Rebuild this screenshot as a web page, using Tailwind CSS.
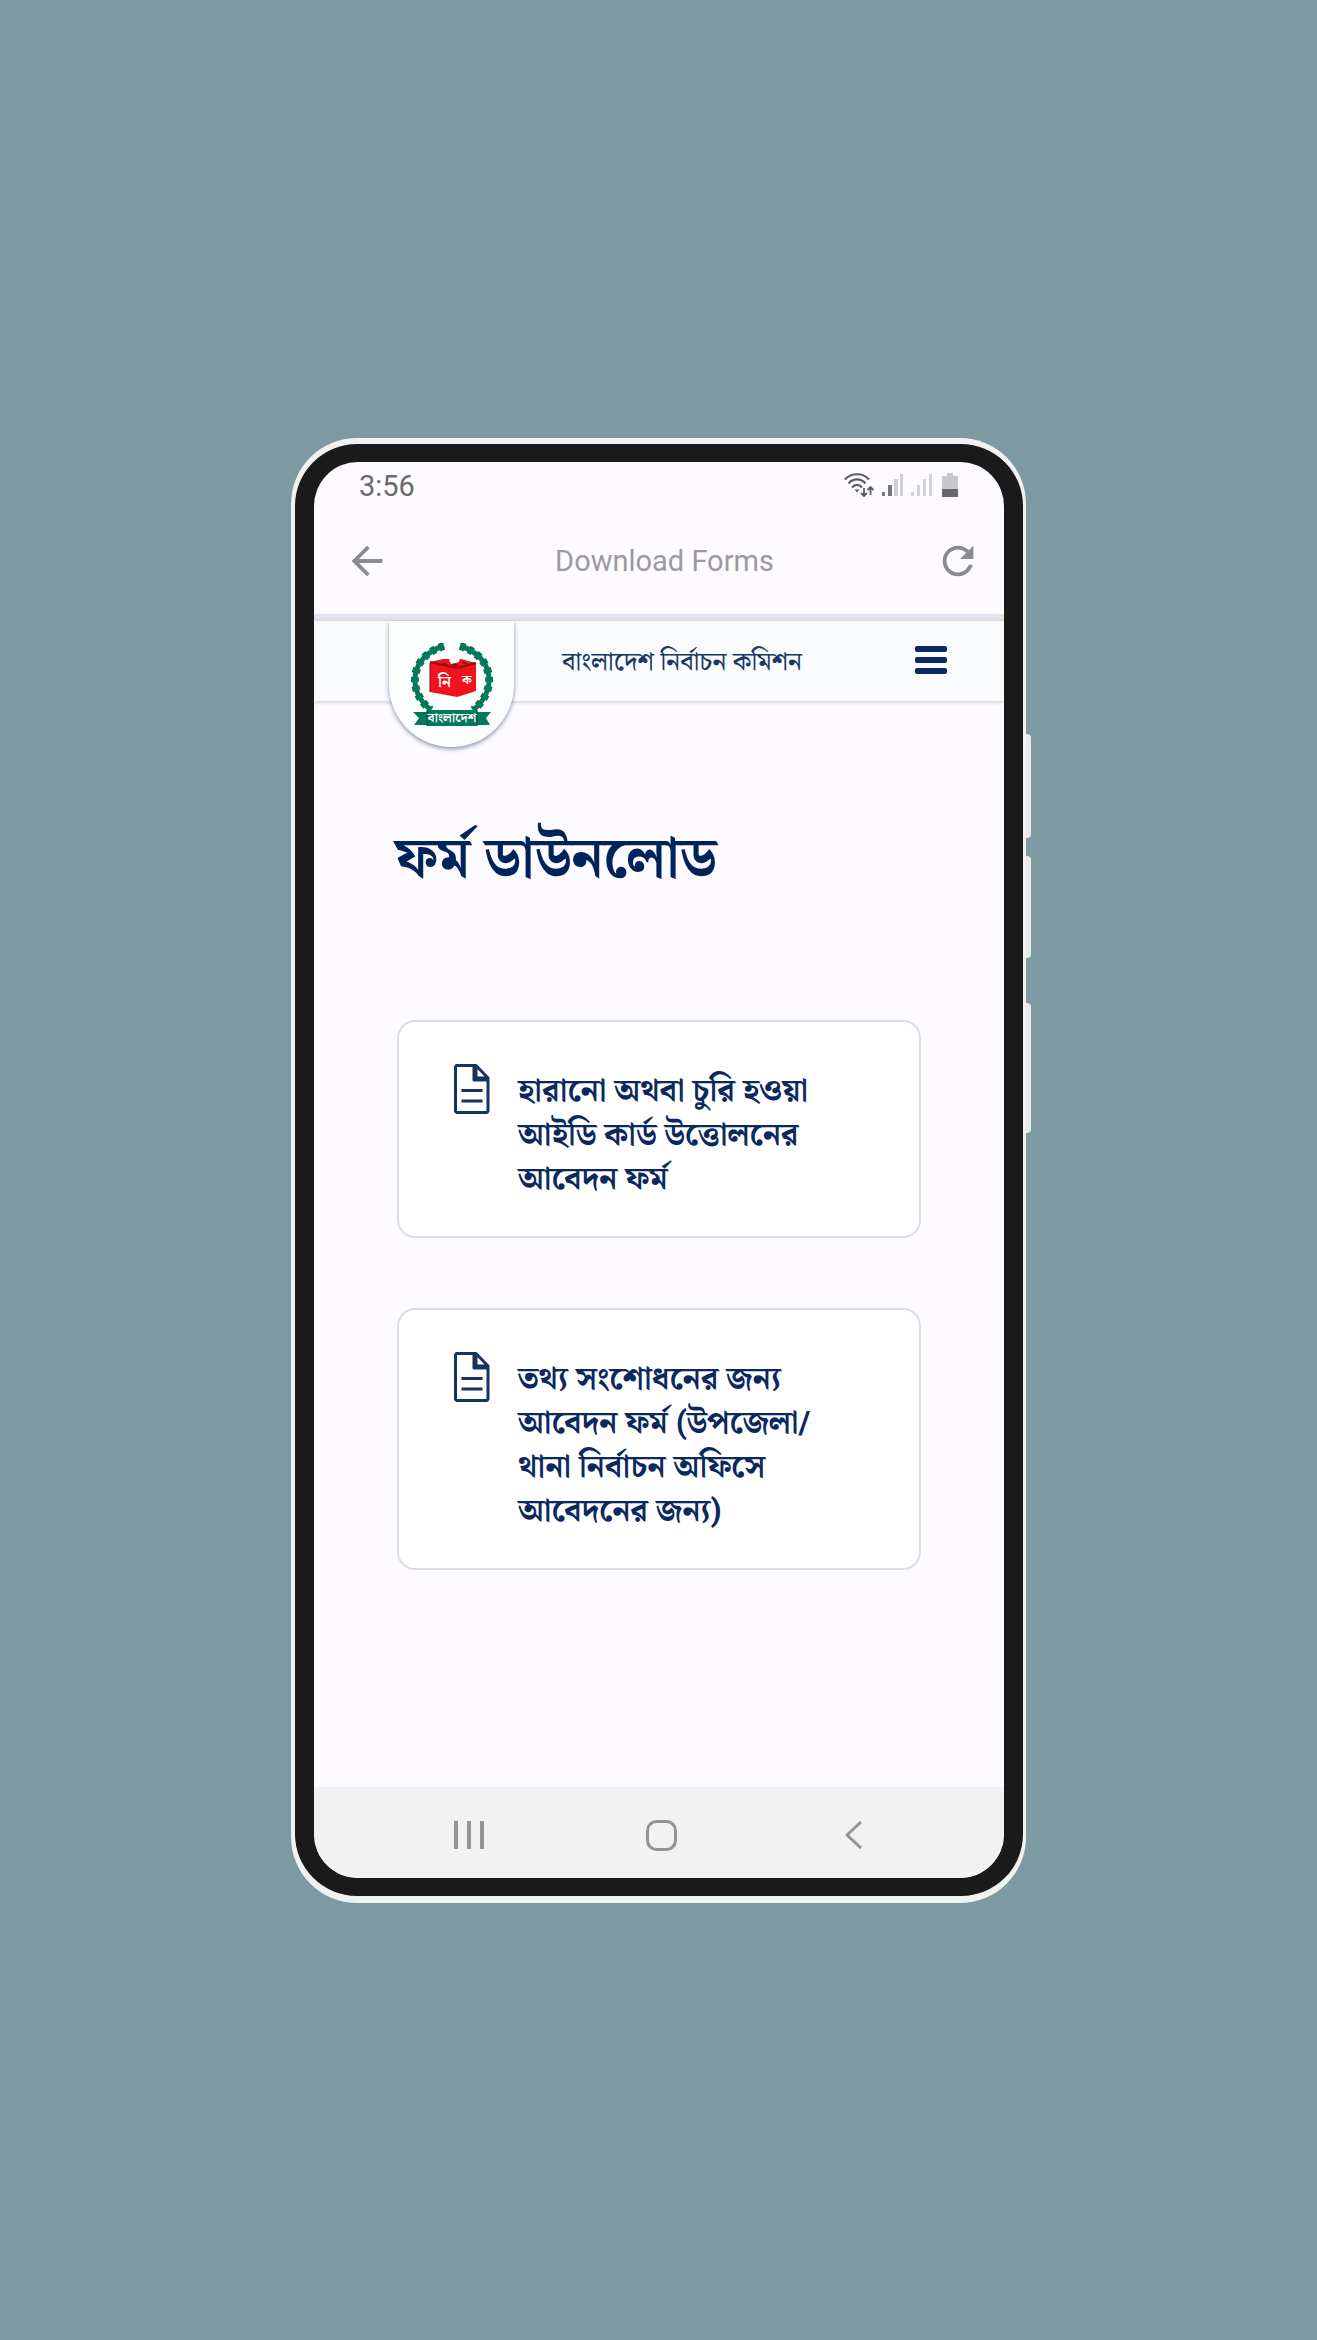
<!DOCTYPE html>
<html lang="bn">
<head>
<meta charset="utf-8">
<meta name="viewport" content="width=device-width, initial-scale=1">
<title>Download Forms</title>
<script src="https://cdn.jsdelivr.net/npm/@tailwindcss/browser@4"></script>
</head>
<body class="flex min-h-screen flex-col items-center justify-center bg-[#7d99a1] font-['Roboto','Noto_Serif_Bengali','Noto_Sans_Bengali',sans-serif]">
<div class="relative w-full max-w-[735px] rounded-[66px] bg-[#f1f1ef] pt-1.5 pr-[3px] pb-[7px] pl-1">
  <!-- side keys -->
  <div class="absolute top-[296px] -right-[5px] h-[104px] w-[5px] rounded-r-[4px] bg-[#e9e9e8]"></div>
  <div class="absolute top-[418px] -right-[5px] h-[102px] w-[5px] rounded-r-[4px] bg-[#e9e9e8]"></div>
  <div class="absolute top-[565px] -right-[5px] h-[130px] w-[5px] rounded-r-[4px] bg-[#e9e9e8]"></div>
  <div class="rounded-[62px] bg-[#1a1a1a] px-[19px] py-[18px]">
    <div class="flex flex-col overflow-hidden rounded-[44px] bg-[#fdfbff]">
      <div class="flex h-12 items-center justify-between pr-[46px] pl-[45px]">
        <span class="text-[29px] leading-8 text-[#6b6a6d]">3:56</span>
        <div class="flex items-center gap-2 pb-0.5">
          <svg class="h-6 w-[30px]" viewBox="0 0 30 24" fill="none" stroke="#5d5c60" stroke-width="2.2" aria-label="Wi-Fi"><path d="M1 6.500C7-.5 19-.5 25 6.500M4.500 10.500C9 5 17 5 21.500 10.500M8 14.500c3-3.500 7-3.500 10 0"/><path d="M10.500 16.500h5L13 19.500z" fill="#5d5c60" stroke="none"/><path d="M20 15v8M17 20l3 3 3-3M26.500 22v-8M23.500 17l3-3 3 3" stroke-width="1.800"/></svg>
          <svg class="h-[22px] w-[21px]" viewBox="0 0 21 22" fill="#cfced1" aria-label="Signal 1"><path d="M0 18h3v4H0zM6 11h4v11H6z" fill="#77767a"/><path d="M12 5h4v17h-4zM18 0h3v22h-3z"/></svg>
          <svg class="h-[22px] w-[21px]" viewBox="0 0 21 22" fill="#d3d2d5" aria-label="Signal 2"><path d="M0 18h3v4H0zM6 11h3v11H6zM12 5h3v17h-3zM18 0h3v22h-3z"/></svg>
          <svg class="ml-0.5 h-6 w-4" viewBox="0 0 16 24" aria-label="Battery"><path d="M5 0h6v3h5v21H0V3h5z" fill="#c8c7ca"/><path d="M0 16h16v8H0z" fill="#68676b"/></svg>
        </div>
      </div>

      <div class="flex h-[104px] items-center justify-between pr-[23px] pb-0.5 pl-[30px]">
        <button class="size-[46px]" aria-label="Back"><svg viewBox="0 0 24 24" fill="#8b8a8c"><path d="M20 11H7.830l5.590-5.590L12 4l-8 8 8 8 1.410-1.410L7.830 13H20v-2z"/></svg></button>
        <h1 class="pl-1 text-[29px] leading-9 text-[#9b9a9d]">Download Forms</h1>
        <button class="size-[46px]" aria-label="Refresh"><svg viewBox="0 0 24 24" fill="#8b8a8c"><path d="M17.650 6.350C16.200 4.900 14.210 4 12 4c-4.420 0-7.990 3.580-7.990 8s3.570 8 7.990 8c3.730 0 6.840-2.550 7.730-6h-2.080c-.82 2.330-3.040 4-5.650 4-3.310 0-6-2.690-6-6s2.690-6 6-6c1.660 0 3.140.69 4.220 1.780L13 11h7V4l-2.350 2.350z"/></svg></button>
      </div>
      <div class="h-[7px] bg-[#e2e3ee]"></div>

      <header class="relative flex h-20 items-center bg-[#fafbfd] pr-[57px] pl-[248px] shadow-[0_1px_4px_rgba(0,0,0,0.22)]">
        <a href="#" class="absolute top-0 left-[75px] flex h-[126px] w-[125px] justify-center rounded-b-full bg-[#fcfdfd] pt-[22px] shadow-[0_2px_4px_rgba(30,50,90,0.5)] [clip-path:inset(0_-10px_-10px_-10px)]" aria-label="বাংলাদেশ নির্বাচন কমিশন">
          <svg class="h-[83px] w-[82px]" viewBox="0 0 82 83">
            <g fill="none" stroke="#04785a">
              <path d="M33 3C-1 13-5 48 20 67M49 3c34 10 38 45 13 64" stroke-width="5"/>
              <path d="M33 3C-1 13-5 48 20 67M49 3c34 10 38 45 13 64" stroke-width="8" stroke-dasharray="5 4"/>
            </g>
            <path d="M19 19 32 16h18l15 4v28l-19 6-27-5z" fill="#f0131b"/>
            <path d="m19 19 27 6 19-5M24 19l5 3M32 20l5 3M41 21l6 2M51 19l5 2" fill="none" stroke="#8f1015" stroke-width="2"/>
            <path d="M19 20v29" stroke="#761014"/>
            <path d="M38 17l4-3 7 1-1 4-8 2z" fill="#fff"/>
            <text x="27" y="44" font-size="16" font-weight="700" fill="#fff">নি</text>
            <text x="51" y="41" font-size="13" font-weight="700" fill="#fff">ক</text>
            <path d="M2 69h14v-2h50v2h14l-5 6 4 7H66v1H16v-1H3l5-7z" fill="#04785a"/>
            <path d="M16 67v16M66 67v16" stroke="#063f31"/>
            <text x="41" y="79" font-size="13" font-weight="700" text-anchor="middle" fill="#fff">বাংলাদেশ</text>
          </svg>
        </a>
        <span class="flex-1 text-[26px] leading-8 font-medium whitespace-nowrap text-[#1b3766]">বাংলাদেশ নির্বাচন কমিশন</span>
        <button class="flex w-8 flex-col gap-[5px] pb-0.5" aria-label="Menu"><span class="h-[6px] w-full rounded-xs bg-[#0c2963]"></span><span class="h-[6px] w-full rounded-xs bg-[#0c2963]"></span><span class="h-[6px] w-full rounded-xs bg-[#0c2963]"></span></button>
      </header>

      <main class="flex min-h-[1086px] flex-col px-[83px] pt-[117px] text-[#0b295e]">
        <h2 class="-ml-0.5 text-[57px] leading-[80px] font-bold text-[#00235c]">ফর্ম ডাউনলোড</h2>
        <div class="mt-[122px] flex flex-col gap-[70px]">
          <a href="#" class="flex items-start gap-7 rounded-[18px] border-2 border-[#dededf] bg-white pt-[42px] pr-10 pb-9 pl-[55px]">
            <svg class="h-[50px] w-[36px] shrink-0" viewBox="0 0 36 50" fill="none" stroke="#163260" stroke-width="3" stroke-linejoin="round"><path d="M4 1.500h18L34 14v32a2 2 0 0 1-2 2.500H4A2 2 0 0 1 1.500 46V4A2 2 0 0 1 4 1.500zM20 2v14h14M22 3v11h11M7.500 26.500h21M7.500 37h21"/></svg>
            <span class="pt-1 text-[32px] leading-[44px] font-bold">হারানো অথবা চুরি হওয়া<br>আইডি কার্ড উত্তোলনের<br>আবেদন ফর্ম</span>
          </a>
          <a href="#" class="flex items-start gap-7 rounded-[18px] border-2 border-[#dededf] bg-white pt-[42px] pr-10 pb-9 pl-[55px]">
            <svg class="h-[50px] w-[36px] shrink-0" viewBox="0 0 36 50" fill="none" stroke="#163260" stroke-width="3" stroke-linejoin="round"><path d="M4 1.500h18L34 14v32a2 2 0 0 1-2 2.500H4A2 2 0 0 1 1.500 46V4A2 2 0 0 1 4 1.500zM20 2v14h14M22 3v11h11M7.500 26.500h21M7.500 37h21"/></svg>
            <span class="pt-1 text-[32px] leading-[44px] font-bold">তথ্য সংশোধনের জন্য<br>আবেদন ফর্ম (উপজেলা/<br>থানা নির্বাচন অফিসে<br>আবেদনের জন্য)</span>
          </a>
        </div>
      </main>

      <nav class="flex h-[91px] items-center justify-center gap-[162px] bg-[#f2f2f2] pt-1.5 pl-1">
        <button class="w-[30px]" aria-label="Recents"><svg class="h-7 w-[30px]" viewBox="0 0 30 28" stroke="#949494" stroke-width="4"><path d="M2 0v28M15 0v28M28 0v28"/></svg></button>
        <button class="w-[31px]" aria-label="Home"><svg class="h-[31px] w-[31px]" viewBox="0 0 31 31" fill="none" stroke="#949494" stroke-width="3"><rect x="1.500" y="1.500" width="28" height="28" rx="9"/></svg></button>
        <button class="w-[30px]" aria-label="Back"><svg class="h-7 w-[30px]" viewBox="0 0 30 28" fill="none" stroke="#949494" stroke-width="3"><path d="M22 1 8 14l14 13" stroke-linejoin="round"/></svg></button>
      </nav>
    </div>
  </div>
</div>
</body>
</html>
